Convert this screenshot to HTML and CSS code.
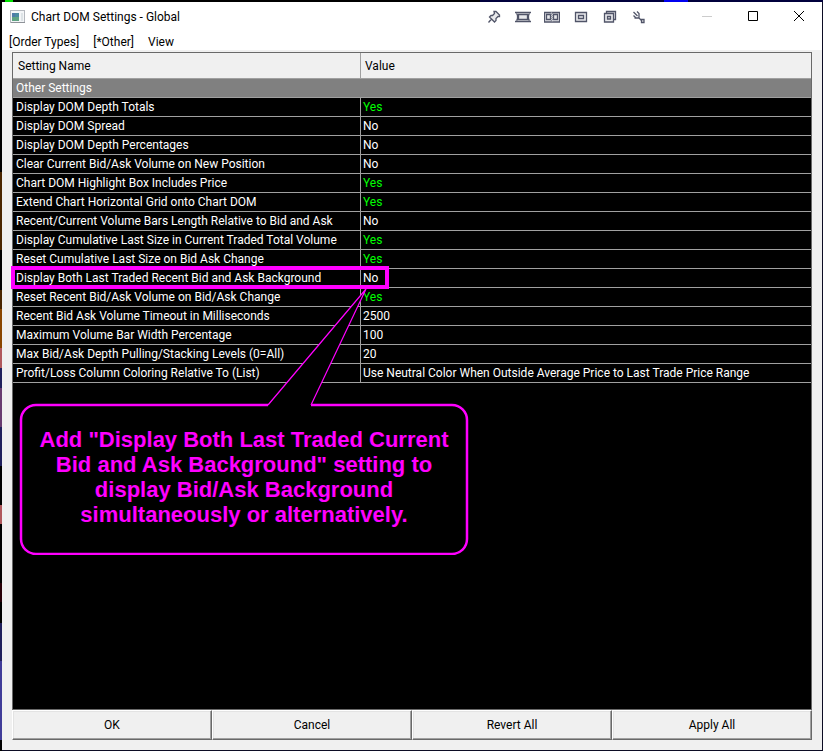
FILE: index.html
```
<!DOCTYPE html>
<html lang="en">
<head>
<meta charset="utf-8">
<title>Chart DOM Settings - Global</title>
<link rel="stylesheet" href="styles.css">
</head>
<body>
<main class="window">
  <header class="titlebar">
    <svg class="app-icon" width="16" height="16" viewBox="0 0 16 16" aria-hidden="true">
      <rect x=".5" y="1.5" width="14" height="12" fill="#f3f5f7" stroke="#b4b8be"/>
      <path d="M1 13.500h14" stroke="#8e9298"/>
      <rect x="2" y="4" width="7" height="8" fill="#4b8aa0"/>
      <rect x="2" y="8" width="7" height="4" fill="#5fa383"/>
      <rect x="2" y="4" width="3" height="4" fill="#4f7ba8"/>
      <rect x="11" y="4" width="2" height="8" fill="#dde3e6"/>
    </svg>
    <h1 class="title">Chart DOM Settings - Global</h1>
    <div class="tools">
      <button class="tool" aria-label="Pin"><svg width="16" height="16" viewBox="0 0 16 16"><path d="M8 2.500h2l3.500 3.500v1.500H12l-2 2v2l-1.500 1.500-5-5L5 6.500h1.500l2-2zM5.500 10l-3 3.500"/></svg></button>
      <button class="tool" aria-label="Roll up"><svg width="16" height="16" viewBox="0 0 16 16"><path d="M0 3.500h16M0 12.500h16M1.500 4.500c1.500 1 1.500 6 0 7M14.500 4.500c-1.500 1-1.500 6 0 7M3.500 5.500h9v5h-9z"/></svg></button>
      <button class="tool" aria-label="Split"><svg width="16" height="16" viewBox="0 0 16 16"><path d="M.5 3.500h15v9.500H.5zM2.500 5.500h4v5h-4zM9.500 5.500h4v5h-4z"/><path class="dots" d="M7.500 3v10M8.500 4v9"/></svg></button>
      <button class="tool" aria-label="Center"><svg width="16" height="16" viewBox="0 0 16 16"><path d="M2.500 3.500h11v9h-11zM5.500 6.500h5v3h-5z"/></svg></button>
      <button class="tool" aria-label="Always on top"><svg width="16" height="16" viewBox="0 0 16 16"><path d="M4.500 5V2.500h9v8H12M2.500 4.500h9v8.500h-9zM5.500 7.500h3v2.500h-3z"/></svg></button>
      <button class="tool" aria-label="Send to monitor"><svg width="16" height="16" viewBox="0 0 16 16"><path class="open" d="M2.500 3l4 4M2.500 6.500l2.500 2.500M6 2.500l2 2v4.500H3.500M8 9l2.500 2.500"/><path d="M10.500 10.500h2.500v3h-2.500z"/></svg></button>
    </div>
    <div class="controls">
      <button class="control" aria-label="Minimize"><svg width="12" height="12" viewBox="0 0 12 12"><path class="faded" d="M1 5.500h10"/></svg></button>
      <button class="control" aria-label="Maximize"><svg width="12" height="12" viewBox="0 0 12 12"><path d="M1.500 .5h9v9h-9z"/></svg></button>
      <button class="control" aria-label="Close"><svg width="12" height="12" viewBox="0 0 12 12"><path d="M1 0l10 10M11 0L1 10"/></svg></button>
    </div>
  </header>
  <nav class="menubar">
    <button class="menu">[Order Types]</button>
    <button class="menu">[*Other]</button>
    <button class="menu">View</button>
  </nav>
  <section class="panel">
    <div class="list">
      <table class="settings">
        <colgroup><col class="name-col"><col></colgroup>
        <thead>
          <tr><th scope="col">Setting Name</th><th scope="col">Value</th></tr>
        </thead>
        <tbody>
          <tr class="group"><th colspan="2" scope="colgroup">Other Settings</th></tr>
          <tr><td>Display DOM Depth Totals</td><td class="yes">Yes</td></tr>
          <tr><td>Display DOM Spread</td><td>No</td></tr>
          <tr><td>Display DOM Depth Percentages</td><td>No</td></tr>
          <tr><td>Clear Current Bid/Ask Volume on New Position</td><td>No</td></tr>
          <tr><td>Chart DOM Highlight Box Includes Price</td><td class="yes">Yes</td></tr>
          <tr><td>Extend Chart Horizontal Grid onto Chart DOM</td><td class="yes">Yes</td></tr>
          <tr><td>Recent/Current Volume Bars Length Relative to Bid and Ask</td><td>No</td></tr>
          <tr><td>Display Cumulative Last Size in Current Traded Total Volume</td><td class="yes">Yes</td></tr>
          <tr><td>Reset Cumulative Last Size on Bid Ask Change</td><td class="yes">Yes</td></tr>
          <tr><td>Display Both Last Traded Recent Bid and Ask Background</td><td>No</td></tr>
          <tr><td>Reset Recent Bid/Ask Volume on Bid/Ask Change</td><td class="yes">Yes</td></tr>
          <tr><td>Recent Bid Ask Volume Timeout in Milliseconds</td><td>2500</td></tr>
          <tr><td>Maximum Volume Bar Width Percentage</td><td>100</td></tr>
          <tr><td>Max Bid/Ask Depth Pulling/Stacking Levels (0=All)</td><td>20</td></tr>
          <tr><td>Profit/Loss Column Coloring Relative To (List)</td><td>Use Neutral Color When Outside Average Price to Last Trade Price Range</td></tr>
        </tbody>
      </table>
      <div class="highlight"></div>
      <aside class="callout">
        <svg class="bubble" width="450" height="267" viewBox="0 0 450 267" aria-hidden="true">
          <path class="shape" d="M249 117H17A15 15 0 0 0 2 132V251A15 15 0 0 0 17 266H433A15 15 0 0 0 448 251V132A15 15 0 0 0 433 117H292"/>
          <path class="tail" d="M249 117L347 1L292 117"/>
        </svg>
        <p class="note">Add "Display Both Last Traded Current<br>Bid and Ask Background" setting to<br>display Bid/Ask Background<br>simultaneously or alternatively.</p>
      </aside>
    </div>
    <footer class="actions">
      <button class="action">OK</button>
      <button class="action">Cancel</button>
      <button class="action">Revert All</button>
      <button class="action">Apply All</button>
    </footer>
  </section>
</main>
</body>
</html>
```
FILE: styles.css
```
* { box-sizing: border-box; }

body {
  margin: 0;
  min-height: 100vh;
  display: flex;
  padding: 2px 1px 1px 2px;
  font: 12px/16px Roboto, "Open Sans", sans-serif;
  color: #000;
  background: linear-gradient(#000 172px, #4a2600 172px 250px, #000 250px 290px, #4a2600 290px 309px, #8a4600 309px 348px, #b0585c 348px 368px, #20205c 368px 388px, #683c70 388px 427px, #20205c 427px 466px, #000 466px 505px, #b0585c 505px 524px, #000 524px 583px, #280008 583px 602px, #000 602px 623px, #20205c 623px 661px, #403c98 661px 740px, #000 740px) left / 2px 100% no-repeat,
    linear-gradient(90deg, #000 5px, #00e000 5px 13px, #000 13px 480px, #00003c 480px 664px, #0000f0 664px 688px, #00003c 688px) top / 100% 2px no-repeat,
    #0c0c24;
}

button {
  margin: 0;
  padding: 0;
  border: 0;
  background: none;
  font: inherit;
  color: inherit;
}

.window {
  flex: 1;
  display: flex;
  flex-direction: column;
  min-width: 0;
  background: #f0f0f0;
}

.titlebar {
  display: flex;
  align-items: center;
  height: 30px;
  padding-left: 8px;
  background: #fff;
}

.title {
  flex: 1;
  margin: 0 0 0 5px;
  font-size: 12px;
  font-weight: 400;
  white-space: nowrap;
}

.tools {
  display: flex;
  gap: 13px;
  margin-right: 37px;
}

.tool { width: 16px; height: 16px; }

svg { display: block; }

.tool path { fill: #e8e9ec; stroke: #505468; stroke-width: 1.3; }

.tool .open { fill: none; }

.tool .dots { fill: none; stroke: #8c8f9c; stroke-dasharray: 1 1; }

.controls { display: flex; }

.control { width: 46px; height: 30px; display: grid; place-items: center; }

.control path { fill: none; stroke: #000; }

.control .faded { stroke: #ccc; }

.menubar {
  display: flex;
  gap: 14px;
  height: 18px;
  padding: 2px 0 0 7px;
  background: #fff;
}

.panel {
  flex: 1;
  display: flex;
  flex-direction: column;
  margin: 2px 10px 10px;
}

.list {
  position: relative;
  flex: 1;
  border: 1px solid #696969;
  background: #000;
}

.settings {
  width: 100%;
  border-spacing: 0;
  table-layout: fixed;
  color: #fff;
}

.name-col { width: 348px; }

.settings th,
.settings td {
  height: 19px;
  padding: 0 3px;
  border-bottom: 1px solid #a0a0a0;
  font-weight: 400;
  line-height: 18px;
  text-align: left;
  white-space: nowrap;
}

.settings td + td { padding-left: 2px; }

.settings tr > :first-child:not([colspan]) { border-right: 1px solid #a0a0a0; }

.settings thead th {
  height: 26px;
  padding: 0 5px;
  background: #f0f0f0;
  color: #000;
}

.settings thead th + th { padding-left: 4px; }

.settings .group th { background: #808080; }

.settings .yes { color: #00ff00; }

.highlight {
  position: absolute;
  left: -2px;
  top: 213px;
  width: 378px;
  height: 23px;
  border: 4px solid #ff00ff;
}

.callout {
  position: absolute;
  left: 6px;
  top: 235px;
  width: 450px;
  height: 267px;
}

.bubble { position: absolute; inset: 0; }

.shape { fill: #000; stroke: #ff00ff; stroke-width: 2.5; }

.tail { fill: #000; stroke: #ff00ff; stroke-width: 1.2; }

.note {
  position: relative;
  margin: 0;
  padding-top: 139px;
  font: bold 22px/25px "Liberation Sans", sans-serif;
  color: #ff00ff;
  text-align: center;
  white-space: nowrap;
}

.actions {
  display: grid;
  grid-template-columns: repeat(4, 1fr);
}

.action {
  height: 30px;
  border: 1px solid;
  border-color: #fff #696969 #696969 #fff;
  background: #f0f0f0;
  box-shadow: inset -1px -1px #a0a0a0, inset 1px 1px #e3e3e3;
}
```
